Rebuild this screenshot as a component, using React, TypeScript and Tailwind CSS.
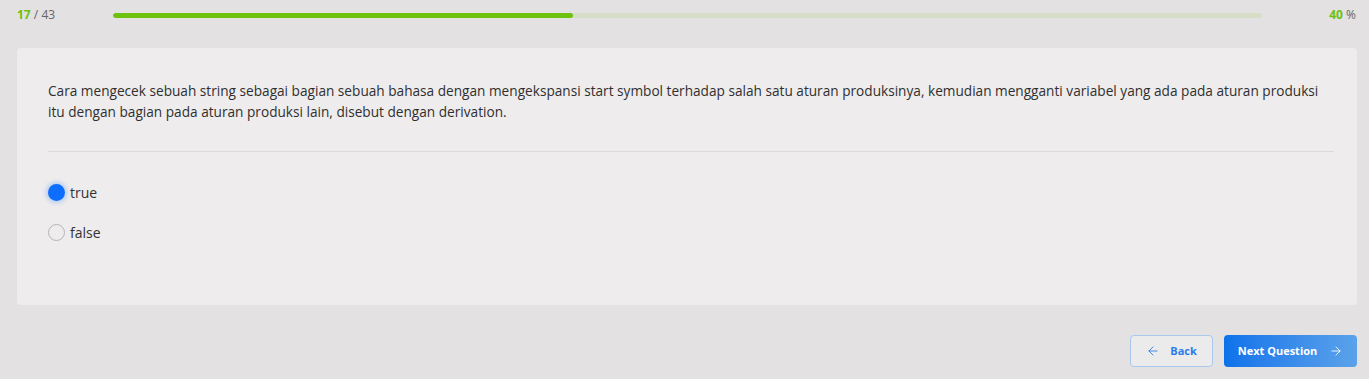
import { ArrowLeft, ArrowRight } from "lucide-react";

const question = {
  index: 17,
  total: 43,
  percent: 40,
  text: "Cara mengecek sebuah string sebagai bagian sebuah bahasa dengan mengekspansi start symbol terhadap salah satu aturan produksinya, kemudian mengganti variabel yang ada pada aturan produksi itu dengan bagian pada aturan produksi lain, disebut dengan derivation.",
  options: ["true", "false"],
  selected: 0,
};

export default function App() {
  return (
    <div
      className="min-h-screen w-full bg-[#e3e1e2] text-[#3b3b3b]"
      style={{ fontFamily: '"Open Sans", "Noto Sans", sans-serif' }}
    >
      {/* Progress */}
      <div className="flex items-center h-[30px] pl-[17px] pr-[13px] text-[12px]">
        <div className="w-[96px]">
          <span className="font-bold text-[#6cc20c]">{question.index}</span>
          <span className="text-[#666]"> / {question.total}</span>
        </div>
        <div className="flex-1 h-[5px] rounded-full bg-[#d6dec8] overflow-hidden">
          <div className="h-full rounded-full bg-[#6cc20c]" style={{ width: `${question.percent}%` }} />
        </div>
        <div className="w-[94px] text-right">
          <span className="font-bold text-[#6cc20c]">{question.percent}</span>
          <span className="text-[#666]"> %</span>
        </div>
      </div>

      {/* Card */}
      <div className="ml-[17px] mr-[12px] mt-[18px] h-[257px] rounded bg-[#eeeced] px-[31px] pt-[32px]">
        <p className="text-[13.65px] leading-[21px] text-[#2f2f2f]">{question.text}</p>
        <div className="mt-[29px] mr-[-8px] h-px bg-[#dcdadb]" />
        <div className="mt-[30px] flex flex-col gap-[19px]">
          {question.options.map((opt, i) => (
            <label key={opt} className="flex items-center gap-[5px] text-[14px] text-[#333]">
              {i === question.selected ? (
                <span className="w-[17px] h-[17px] rounded-full bg-[#0d6efd] shadow-[0_0_4px_2px_rgba(13,110,253,0.25)]" />
              ) : (
                <span className="w-[17px] h-[17px] rounded-full border-[1.5px] border-[#b5b5b5] bg-[#eeeced]" />
              )}
              <span>{opt}</span>
            </label>
          ))}
        </div>
      </div>

      {/* Actions */}
      <div className="flex justify-end gap-[11px] pr-[12px] mt-[30px]">
        <button className="flex items-center gap-[10px] h-[32px] w-[83px] justify-center rounded border border-[#a9c9f0] bg-[#ebebec] text-[11px] font-bold text-[#2a7de8]">
          <ArrowLeft className="w-[14px] h-[14px]" strokeWidth={1.5} />
          Back
        </button>
        <button className="flex items-center gap-[12px] h-[32px] w-[133px] justify-center rounded bg-gradient-to-r from-[#0b72ea] to-[#5aa2ea] text-[11px] font-bold text-white">
          Next Question
          <ArrowRight className="w-[14px] h-[14px]" strokeWidth={1.5} />
        </button>
      </div>
    </div>
  );
}
